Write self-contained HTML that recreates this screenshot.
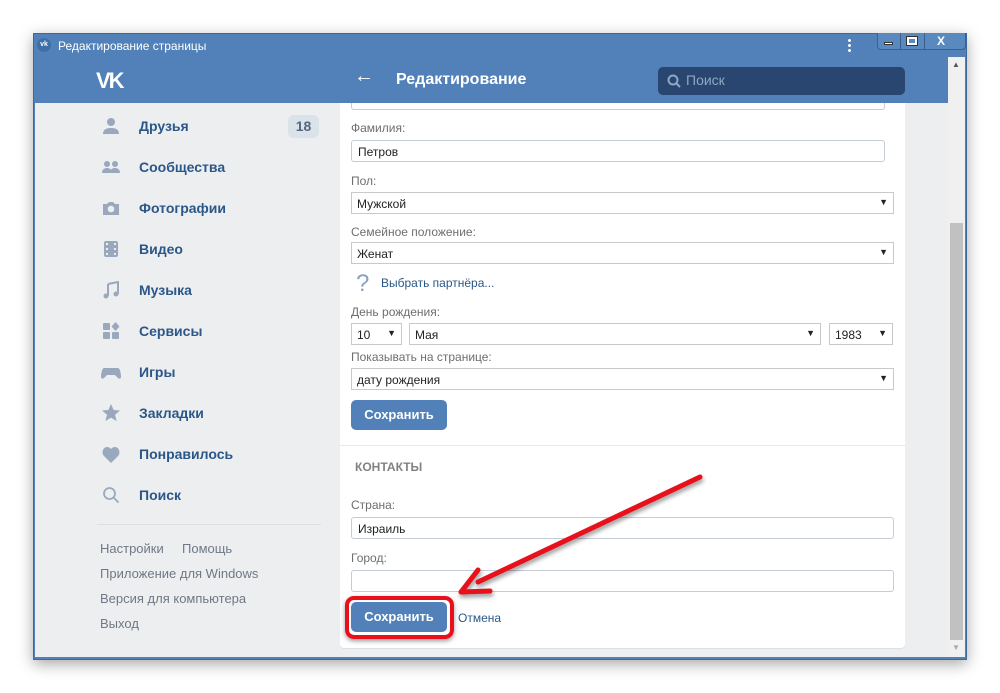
<!DOCTYPE html>
<html><head><meta charset="utf-8"><style>
*{margin:0;padding:0;box-sizing:border-box}
body{width:1000px;height:693px;background:#fff;position:relative;overflow:hidden;font-family:"Liberation Sans",sans-serif}
.a{position:absolute}
.win{left:33px;top:33px;width:934px;height:627px;background:#5181b8;box-shadow:0 4px 14px rgba(0,0,0,.35);border:1px solid #3a6aa0}
.nav{left:139px;font-size:14px;font-weight:bold;color:#2b5788}
.ic{left:102px;width:18px;height:18px}
.ft{left:100px;font-size:13px;color:#6f7985}
.lbl{left:351px;font-size:12px;color:#6e6e6e}
.inp{left:351px;height:22px;border:1px solid #c5ccd6;border-radius:3px;background:#fff;font-size:12px;color:#222;padding:4px 0 0 6px}
.sel{left:351px;height:22px;border:1px solid #c9c9c9;background:#fff;font-size:12px;color:#222;padding:4px 0 0 5px}
.sel i{position:absolute;right:5px;top:4px;font-style:normal;font-size:9px}
.btn{background:#5181b8;color:#fff;font-weight:bold;font-size:13px;border-radius:5px;text-align:center;line-height:30px}
</style></head><body>
<div class="a win"></div>
<div class="a" style="left:37px;top:38px;width:14px;height:14px;border-radius:50%;background:#3f6fa8;color:#fff;font-size:7px;font-weight:bold;text-align:center;line-height:14px">vk</div>
<div class="a" style="left:58px;top:39px;font-size:12px;color:#fff">Редактирование страницы</div>
<div class="a" style="left:848px;top:38px;width:3px;height:15px;background:radial-gradient(circle,#fff 1.3px,transparent 1.6px) 0 0/3px 5px"></div>
<div class="a" style="left:877px;top:33px;width:89px;height:17px;border:1px solid #3a5f8c;border-top:none;border-radius:0 0 4px 4px;background:#5a89bf"></div>
<div class="a" style="left:900px;top:33px;width:1px;height:17px;background:#3a5f8c"></div>
<div class="a" style="left:924px;top:33px;width:1px;height:17px;background:#3a5f8c"></div>
<div class="a" style="left:884px;top:42px;width:9px;height:3px;background:#fff;border:1px solid #333"></div>
<div class="a" style="left:907px;top:37px;width:10px;height:8px;border:2px solid #fff;outline:1px solid #333"></div>
<div class="a" style="left:937px;top:34px;font-size:12px;color:#fff;font-weight:bold">X</div>
<!-- header -->
<div class="a" style="left:96px;top:68px;font-size:22px;font-weight:900;color:#fff;letter-spacing:-2px">VK</div>
<div class="a" style="left:354px;top:65px;font-size:20px;color:#fff">&#8592;</div>
<div class="a" style="left:396px;top:71px;font-size:16px;font-weight:bold;color:#fff">Редактирование</div>
<div class="a" style="left:658px;top:67px;width:247px;height:28px;background:#284670;border-radius:5px"></div>
<svg class="a" style="left:666px;top:73px" width="16" height="16"><circle cx="7" cy="7" r="4.5" fill="none" stroke="#8fa7c6" stroke-width="2"/><path d="M10 10l4 4" stroke="#8fa7c6" stroke-width="2"/></svg>
<div class="a" style="left:686px;top:72px;font-size:14px;color:#8fa7c6">Поиск</div>
<!-- body -->
<div class="a" style="left:35px;top:103px;width:913px;height:554px;background:#edeef0"></div>
<div class="a" style="left:948px;top:57px;width:17px;height:600px;background:#f0f0f0"></div>
<div class="a" style="left:950px;top:223px;width:13px;height:417px;background:#c1c1c1"></div>
<div class="a" style="left:952px;top:60px;font-size:8px;color:#555">▲</div>
<div class="a" style="left:952px;top:643px;font-size:8px;color:#aaa">▼</div>
<!-- sidebar -->
<svg class="a ic" style="top:117px"><circle cx="9" cy="5" r="4" fill="#9aa8bd"/><path d="M1 17c0-5 4-6 8-6s8 1 8 6z" fill="#9aa8bd"/></svg>
<svg class="a ic" style="top:158px"><circle cx="5" cy="6" r="3" fill="#9aa8bd"/><circle cx="13" cy="6" r="3" fill="#9aa8bd"/><path d="M0 15c0-4 3-5 5-5s5 1 5 5zM8 15c0-4 3-5 5-5s5 1 5 5z" fill="#9aa8bd"/></svg>
<svg class="a ic" style="top:199px"><path d="M1 5h4l2-2h4l2 2h4v11H1z" fill="#9aa8bd"/><circle cx="9" cy="10" r="3.3" fill="#edeef0"/></svg>
<svg class="a ic" style="top:240px"><rect x="2" y="1" width="14" height="16" rx="2" fill="#9aa8bd"/><g fill="#edeef0"><rect x="4" y="3" width="2" height="2"/><rect x="4" y="8" width="2" height="2"/><rect x="4" y="13" width="2" height="2"/><rect x="12" y="3" width="2" height="2"/><rect x="12" y="8" width="2" height="2"/><rect x="12" y="13" width="2" height="2"/></g></svg>
<svg class="a ic" style="top:281px"><path d="M6 3l10-2v12" fill="none" stroke="#9aa8bd" stroke-width="2"/><path d="M6 3v12" stroke="#9aa8bd" stroke-width="2"/><circle cx="4" cy="15" r="2.5" fill="#9aa8bd"/><circle cx="14" cy="13" r="2.5" fill="#9aa8bd"/></svg>
<svg class="a ic" style="top:322px"><rect x="1" y="1" width="7" height="7" rx="1" fill="#9aa8bd"/><rect x="1" y="10" width="7" height="7" rx="1" fill="#9aa8bd"/><rect x="10" y="10" width="7" height="7" rx="1" fill="#9aa8bd"/><path d="M13.5 0l4 4.5-4 4.5-4-4.5z" fill="#9aa8bd"/></svg>
<svg class="a ic" style="top:364px;width:20px;left:101px"><path d="M3 4h14c2 0 3 6 3 9 0 2-2 2-3 1l-3-3H6l-3 3c-1 1-3 1-3-1 0-3 1-9 3-9z" fill="#9aa8bd"/></svg>
<svg class="a ic" style="top:404px"><path d="M9 0l2.6 6 6.4.5-5 4.2 1.6 6.3L9 13.6 3.4 17 5 10.7 0 6.5 6.4 6z" fill="#9aa8bd"/></svg>
<svg class="a ic" style="top:446px"><path d="M9 17L2 10C-1 7 1 1 5 1c2 0 3 1 4 2 1-1 2-2 4-2 4 0 6 6 3 9z" fill="#9aa8bd"/></svg>
<svg class="a ic" style="top:486px"><circle cx="7.5" cy="7.5" r="5.5" fill="none" stroke="#9aa8bd" stroke-width="1.8"/><path d="M11.5 11.5l5 5" stroke="#9aa8bd" stroke-width="1.8"/></svg>
<div class="a nav" style="top:118px">Друзья</div>
<div class="a" style="left:288px;top:115px;width:31px;height:23px;background:#dae2ea;border-radius:6px;font-size:14px;font-weight:bold;color:#55677d;text-align:center;line-height:23px">18</div>
<div class="a nav" style="top:159px">Сообщества</div>
<div class="a nav" style="top:200px">Фотографии</div>
<div class="a nav" style="top:241px">Видео</div>
<div class="a nav" style="top:282px">Музыка</div>
<div class="a nav" style="top:323px">Сервисы</div>
<div class="a nav" style="top:364px">Игры</div>
<div class="a nav" style="top:405px">Закладки</div>
<div class="a nav" style="top:446px">Понравилось</div>
<div class="a nav" style="top:487px">Поиск</div>
<div class="a" style="left:97px;top:524px;width:224px;height:1px;background:#dce1e6"></div>
<div class="a ft" style="top:541px">Настройки</div>
<div class="a ft" style="left:182px;top:541px">Помощь</div>
<div class="a ft" style="top:566px">Приложение для Windows</div>
<div class="a ft" style="top:591px">Версия для компьютера</div>
<div class="a ft" style="top:616px">Выход</div>
<!-- panel -->
<div class="a" style="left:340px;top:103px;width:565px;height:545px;background:#fff;border-radius:0 0 4px 4px;box-shadow:0 1px 0 #dce1e6"></div>
<div class="a inp" style="top:103px;width:534px;height:7px;border-top:none;border-radius:0 0 3px 3px"></div>
<div class="a lbl" style="top:121px">Фамилия:</div>
<div class="a inp" style="top:140px;width:534px">Петров</div>
<div class="a lbl" style="top:174px">Пол:</div>
<div class="a sel" style="top:192px;width:543px">Мужской<i>▼</i></div>
<div class="a lbl" style="top:225px">Семейное положение:</div>
<div class="a sel" style="top:242px;width:543px">Женат<i>▼</i></div>
<div class="a" style="left:356px;top:270px;font-size:24px;color:#8aa2bf">?</div>
<div class="a" style="left:381px;top:276px;font-size:12px;color:#2a5885">Выбрать партнёра...</div>
<div class="a lbl" style="top:305px">День рождения:</div>
<div class="a sel" style="top:323px;width:51px">10<i>▼</i></div>
<div class="a sel" style="left:409px;top:323px;width:412px">Мая<i>▼</i></div>
<div class="a sel" style="left:829px;top:323px;width:64px">1983<i>▼</i></div>
<div class="a lbl" style="top:350px">Показывать на странице:</div>
<div class="a sel" style="top:368px;width:543px">дату рождения<i>▼</i></div>
<div class="a btn" style="left:351px;top:400px;width:96px;height:30px">Сохранить</div>
<div class="a" style="left:340px;top:445px;width:565px;height:1px;background:#e7e8ec"></div>
<div class="a" style="left:355px;top:460px;font-size:12px;font-weight:bold;color:#828282">КОНТАКТЫ</div>
<div class="a lbl" style="top:498px">Страна:</div>
<div class="a inp" style="top:517px;width:543px">Израиль</div>
<div class="a lbl" style="top:551px">Город:</div>
<div class="a inp" style="top:570px;width:543px"></div>
<div class="a" style="left:345px;top:596px;width:109px;height:43px;border:4px solid #e8101a;border-radius:9px;box-shadow:0 2px 5px rgba(0,0,0,.4)"></div>
<div class="a btn" style="left:351px;top:602px;width:96px;height:30px">Сохранить</div>
<div class="a" style="left:458px;top:611px;font-size:12px;color:#2a5885">Отмена</div>
<svg class="a" style="left:0;top:0;filter:drop-shadow(1px 3px 2px rgba(0,0,0,.4))" width="1000" height="693"><path d="M700 477L478 582" stroke="#e8101a" stroke-width="5" stroke-linecap="round"/><path d="M461 592L478 570M461 592L490 591" stroke="#e8101a" stroke-width="5" stroke-linecap="round" fill="none"/></svg>
</body></html>
